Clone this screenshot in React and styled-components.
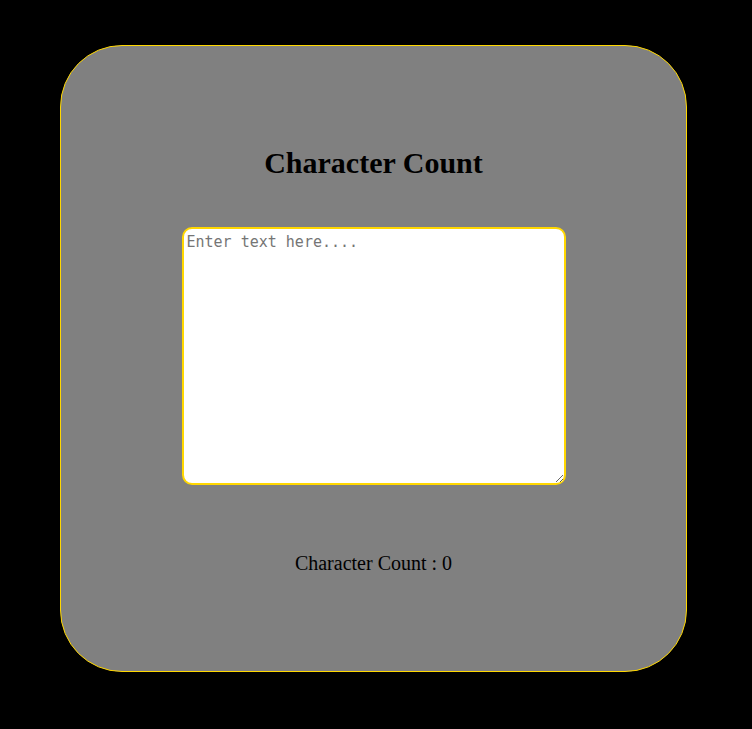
import React, { useState } from "react";
import styled, { createGlobalStyle } from "styled-components";

const GlobalStyle = createGlobalStyle`
    body {
        margin: 0;
        background: #000;
        font-family: "Liberation Serif", "Times New Roman", serif;
    }
`;

const Card = styled.div`
    box-sizing: border-box;
    width: 627px;
    height: 627px;
    margin: 45px 0 0 60px;
    padding-top: 100px;
    background: #808080;
    border: 1px solid #ffd700;
    border-radius: 62px;
    display: flex;
    flex-direction: column;
    align-items: center;
`;

const Title = styled.h1`
    margin: 0;
    font-size: 30px;
    line-height: 34px;
    font-weight: bold;
    color: #000;
`;

const TextBox = styled.textarea`
    box-sizing: border-box;
    width: 384px;
    height: 258px;
    margin-top: 47px;
    padding: 4px 2px 2px 3px;
    border: 2px solid #ffd700;
    border-radius: 10px;
    background: #fff;
    font-family: "DejaVu Sans Mono", monospace;
    font-size: 15px;
    outline: none;

    ::placeholder {
        color: #757575;
    }
`;

const Count = styled.p`
    margin: 67px 0 0;
    font-size: 20px;
    line-height: 23px;
    color: #000;
`;

const App = () => {
    const [text, setText] = useState("");

    return (
        <>
            <GlobalStyle />
            <Card>
                <Title>Character Count</Title>
                <TextBox
                    placeholder="Enter text here...."
                    value={text}
                    onChange={(e) => setText(e.target.value)}
                />
                <Count>Character Count : {text.length}</Count>
            </Card>
        </>
    );
};

export default App;
